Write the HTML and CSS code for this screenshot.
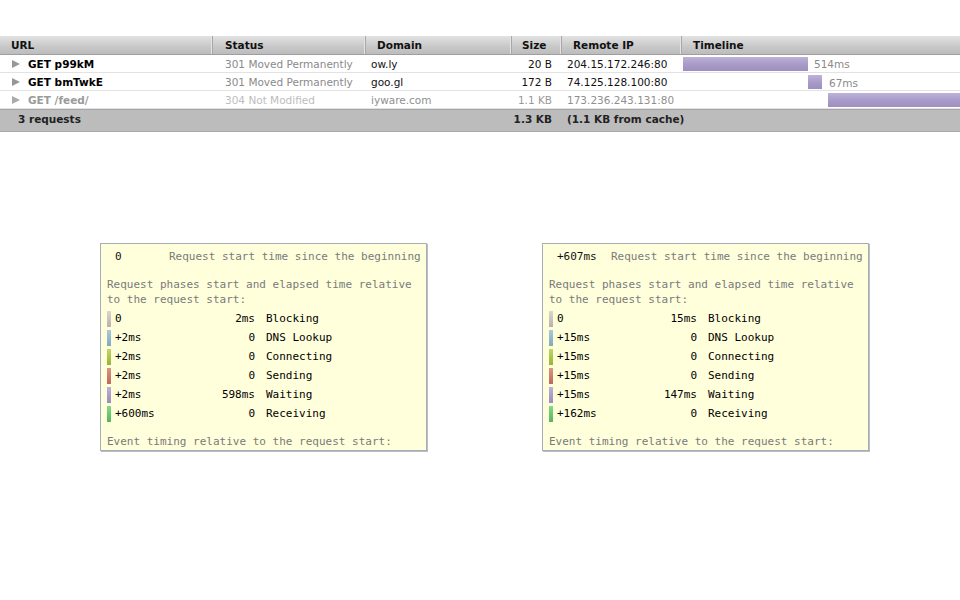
FILE: index.html
```html
<!DOCTYPE html>
<html>
<head>
<meta charset="utf-8">
<link rel="stylesheet" href="styles.css">
</head>
<body>
<div class="net">
  <div class="row head">
    <div class="c url">URL</div>
    <div class="c status">Status</div>
    <div class="c domain">Domain</div>
    <div class="c size">Size</div>
    <div class="c ip">Remote IP</div>
    <div class="c time">Timeline</div>
  </div>
  <div class="row req">
    <div class="c url"><span class="tri"></span><b>GET p99kM</b></div>
    <div class="c status">301 Moved Permanently</div>
    <div class="c domain">ow.ly</div>
    <div class="c size">20 B</div>
    <div class="c ip">204.15.172.246:80</div>
    <div class="c time"><span class="bar" style="margin-left:0;width:125px"></span><span class="ms">514ms</span></div>
  </div>
  <div class="row req">
    <div class="c url"><span class="tri"></span><b>GET bmTwkE</b></div>
    <div class="c status">301 Moved Permanently</div>
    <div class="c domain">goo.gl</div>
    <div class="c size">172 B</div>
    <div class="c ip">74.125.128.100:80</div>
    <div class="c time"><span class="bar" style="margin-left:125px;width:14px"></span><span class="ms low">67ms</span></div>
  </div>
  <div class="row req cached">
    <div class="c url"><span class="tri"></span><b>GET /feed/</b></div>
    <div class="c status">304 Not Modified</div>
    <div class="c domain">iyware.com</div>
    <div class="c size">1.1 KB</div>
    <div class="c ip">173.236.243.131:80</div>
    <div class="c time"><span class="bar" style="margin-left:145px;width:140px"></span></div>
  </div>
  <div class="row foot">
    <div class="c url">3 requests</div>
    <div class="c status"></div>
    <div class="c domain"></div>
    <div class="c size">1.3 KB</div>
    <div class="c ip wide">(1.1 KB from cache)</div>
  </div>
</div>

<div class="tip tip1">
  <div class="start"><span class="sv">0</span><span class="desc">Request start time since the beginning</span></div>
  <div class="desc para">Request phases start and elapsed time relative to the request start:</div>
  <div class="phases">
    <div class="ph"><span class="sw blocking"></span><span class="st">0</span><span class="el">2ms</span><span class="lb">Blocking</span></div>
    <div class="ph"><span class="sw dns"></span><span class="st">+2ms</span><span class="el">0</span><span class="lb">DNS Lookup</span></div>
    <div class="ph"><span class="sw connect"></span><span class="st">+2ms</span><span class="el">0</span><span class="lb">Connecting</span></div>
    <div class="ph"><span class="sw send"></span><span class="st">+2ms</span><span class="el">0</span><span class="lb">Sending</span></div>
    <div class="ph"><span class="sw wait"></span><span class="st">+2ms</span><span class="el">598ms</span><span class="lb">Waiting</span></div>
    <div class="ph"><span class="sw recv"></span><span class="st">+600ms</span><span class="el">0</span><span class="lb">Receiving</span></div>
  </div>
  <div class="desc event">Event timing relative to the request start:</div>
</div>

<div class="tip tip2">
  <div class="start"><span class="sv">+607ms</span><span class="desc">Request start time since the beginning</span></div>
  <div class="desc para">Request phases start and elapsed time relative to the request start:</div>
  <div class="phases">
    <div class="ph"><span class="sw blocking"></span><span class="st">0</span><span class="el">15ms</span><span class="lb">Blocking</span></div>
    <div class="ph"><span class="sw dns"></span><span class="st">+15ms</span><span class="el">0</span><span class="lb">DNS Lookup</span></div>
    <div class="ph"><span class="sw connect"></span><span class="st">+15ms</span><span class="el">0</span><span class="lb">Connecting</span></div>
    <div class="ph"><span class="sw send"></span><span class="st">+15ms</span><span class="el">0</span><span class="lb">Sending</span></div>
    <div class="ph"><span class="sw wait"></span><span class="st">+15ms</span><span class="el">147ms</span><span class="lb">Waiting</span></div>
    <div class="ph"><span class="sw recv"></span><span class="st">+162ms</span><span class="el">0</span><span class="lb">Receiving</span></div>
  </div>
  <div class="desc event">Event timing relative to the request start:</div>
</div>
</body>
</html>
```
FILE: styles.css
```css
html, body { margin: 0; padding: 0; background: #fff; }
body { font-family: "DejaVu Sans", Verdana, sans-serif; font-size: 10.5px; color: #000; position: relative; width: 960px; height: 600px; overflow: hidden; }

.net { margin-top: 36px; }
.row { display: grid; grid-template-columns: 213px 153px 146px 50px 120px 278px; }
.c { white-space: nowrap; overflow: hidden; display: flex; align-items: center; }

.head { height: 18px; background: linear-gradient(#e2e2e2, #c8c8c8 60%, #bcbcbc); border-bottom: 1px solid #9e9e9e; font-weight: bold; color: #111; }
.head .c { padding-left: 11px; border-right: 1px solid #a8a8a8; box-shadow: inset -1px 0 0 #e4e4e4; }
.head .status { padding-left: 12px; }
.head .c:last-child { border-right: none; box-shadow: none; }
.head .size { padding-left: 10px; }
.head .ip { padding-left: 11px; }

.req { height: 17px; border-bottom: 1px solid #e2e2e2; }
.req .url { padding-left: 12px; }
.req .url b { color: #000; }
.tri { width: 0; height: 0; border-left: 8px solid #979797; border-top: 4.5px solid transparent; border-bottom: 4.5px solid transparent; margin-right: 8px; }
.req .status { padding-left: 12px; color: #8a8a8a; }
.req .domain { padding-left: 5px; color: #111; }
.req .size { justify-content: flex-end; padding-right: 10px; color: #111; }
.req .ip { padding-left: 5px; color: #111; }
.req .time { padding-left: 1px; overflow: visible; }
.bar { display: block; height: 14px; background: linear-gradient(#bdb2d8, #a99cc9 50%, #9d90c0); flex: none; }
.ms { color: #8a8a8a; margin-left: 6px; }
.ms.low { margin-left: 7px; margin-top: 2px; }

.cached { color: #999; }
.req.cached .url b { color: #9a9a9a; }
.cached .tri { border-left-color: #ababab; }
.req.cached .status { color: #bdbdbd; }
.req.cached .domain, .req.cached .ip { color: #8f8f8f; }
.req.cached .size { color: #999; }

.foot { height: 21px; background: #bcbcbc; border-top: 1px solid #a5a5a5; border-bottom: 1px solid #a9a9a9; font-weight: bold; color: #222; grid-template-columns: 213px 153px 146px 50px 398px; }
.foot .c { padding-bottom: 3px; }
.foot .url { padding-left: 18px; }
.foot .size { justify-content: flex-end; padding-right: 10px; }
.foot .ip { padding-left: 5px; }

/* tooltips */
.tip { position: absolute; top: 243px; width: 325px; height: 206px; overflow: hidden; background: #ffffdc; border: 1px solid #a6adb4; box-shadow: 1px 1px 0 #b8bec4; font-family: "DejaVu Sans Mono", "Liberation Mono", monospace; font-size: 11px; line-height: 15px; color: #000; padding: 0; }
.tip1 { left: 100px; }
.tip2 { left: 542px; }
.desc { color: #7a7a7a; }
.start { display: flex; padding: 5px 0 0 14px; }
.sv { width: 54px; flex: none; color: #111; }
.para { padding: 13px 8px 0 6px; }
.phases { padding: 2px 0 0 6px; }
.ph { display: flex; align-items: center; height: 19px; }
.sw { width: 4px; height: 16px; flex: none; margin-right: 4px; }
.st { width: 70px; flex: none; }
.el { width: 70px; flex: none; text-align: right; }
.lb { margin-left: 11px; }
.event { padding: 11px 0 0 6px; }

.blocking { background: linear-gradient(#dcd6cf, #b9b1a8); }
.dns { background: linear-gradient(#a8cbdc, #7fa9bd); }
.connect { background: linear-gradient(#c2d66a, #99b334); }
.send { background: linear-gradient(#d99587, #bf6957); }
.wait { background: linear-gradient(#bcb1d8, #9a8cc0); }
.recv { background: linear-gradient(#86d98a, #56b55a); }
```
